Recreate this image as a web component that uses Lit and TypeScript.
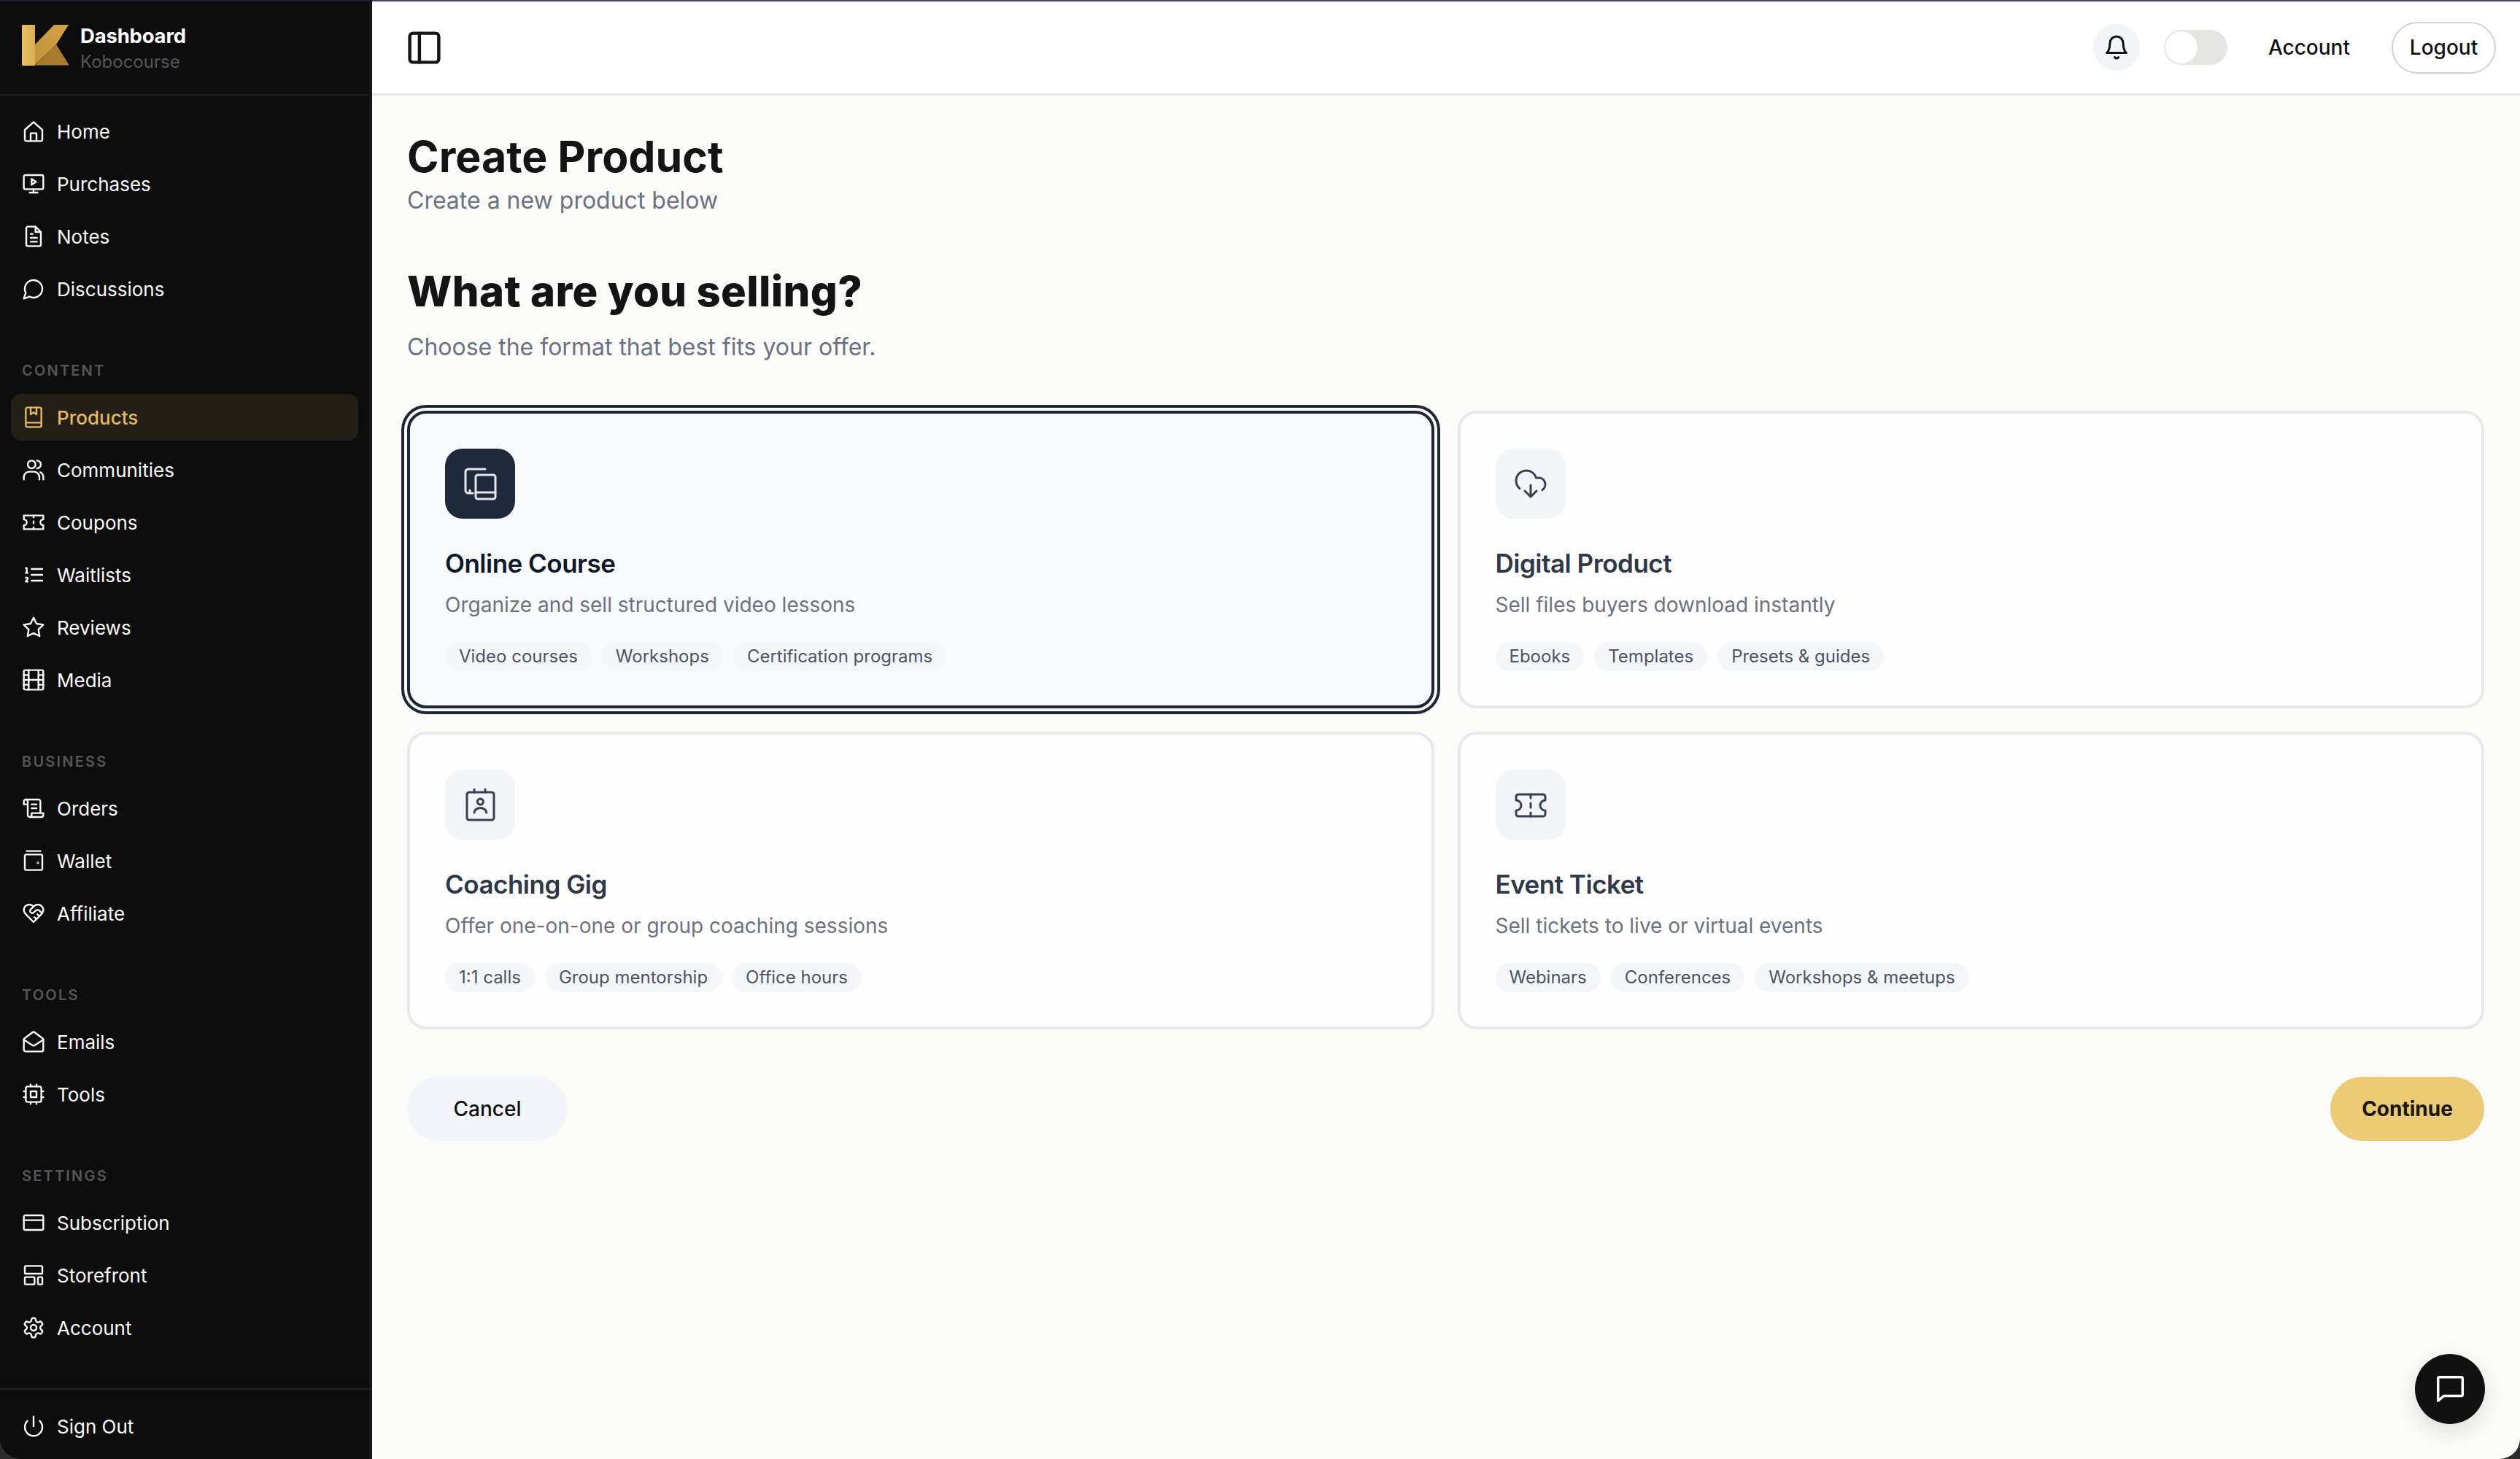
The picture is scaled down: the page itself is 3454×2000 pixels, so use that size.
import { LitElement, html, css, svg } from 'lit';
import { customElement } from 'lit/decorators.js';

const icons: Record<string, unknown> = {
  home: svg`<path d="M3 10.5 12 2.5l9 8V20.5a1.5 1.5 0 0 1-1.5 1.5h-15A1.5 1.5 0 0 1 3 20.5z"/><path d="M9 22v-8h6v8"/>`,
  purchases: svg`<rect x="2" y="3" width="20" height="14.5" rx="1.5"/><path d="M10 7v6l4.5-3z"/><path d="M12 17.5V21M8 21h8"/>`,
  notes: svg`<path d="M14 2H6a1.5 1.5 0 0 0-1.5 1.5v17A1.5 1.5 0 0 0 6 22h12a1.5 1.5 0 0 0 1.5-1.5V7.5z"/><path d="M14 2v5.5h5.5M9 9.5h2M9 13.5h6.5M9 17.5h6.5"/>`,
  discussions: svg`<path d="M7.9 20A9 9 0 1 0 4 16.1L2 22Z"/>`,
  products: svg`<path d="M4 3.5A1.5 1.5 0 0 1 5.5 2h13A1.5 1.5 0 0 1 20 3.5v17a1.5 1.5 0 0 1-1.5 1.5h-13A1.5 1.5 0 0 1 4 20.5z"/><path d="M4 17.5h16M9 2v7l3-2 3 2V2"/>`,
  communities: svg`<circle cx="10" cy="6.5" r="4"/><path d="M2 22v-2.5A5.5 5.5 0 0 1 7.5 14h5a5.5 5.5 0 0 1 5.5 5.5V22"/><path d="M15.5 2.5a4 4 0 0 1 0 8M19 14.5a5.5 5.5 0 0 1 3 5V22"/>`,
  coupons: svg`<path d="M2 5h20v4a3 3 0 0 0 0 6v4H2v-4a3 3 0 0 0 0-6z"/><path d="M12 5v2M12 11v2M12 17v2"/>`,
  waitlists: svg`<path d="M10 6h11M10 12h11M10 18h11M4 5h1v5M4 10h2M6 19H4c0-1 2-1.800 2-3s-1-1.500-2-1"/>`,
  reviews: svg`<polygon points="12 2 15.090 8.260 22 9.270 17 14.140 18.180 21.020 12 17.770 5.820 21.020 7 14.140 2 9.270 8.910 8.260 12 2"/>`,
  media: svg`<rect x="2" y="2" width="20" height="20" rx="1.500"/><path d="M7 2v20M17 2v20M2 12h20M2 7h5M2 17h5M17 7h5M17 17h5"/>`,
  orders: svg`<path d="M8 21h12a2 2 0 0 0 2-2v-2H10v2a2 2 0 1 1-4 0V5a2 2 0 1 0-4 0v3h4"/><path d="M19 17V5a2 2 0 0 0-2-2H4M15 8h-5M15 12h-5"/>`,
  wallet: svg`<path d="M5 2h14"/><rect x="3" y="5.500" width="18" height="16" rx="1.500"/><circle cx="16.500" cy="14" r=".4"/>`,
  affiliate: svg`<path d="M19 14c1.490-1.460 3-3.210 3-5.500A5.500 5.500 0 0 0 16.500 3c-1.760 0-3 .5-4.500 2-1.500-1.500-2.740-2-4.500-2A5.500 5.500 0 0 0 2 8.500c0 2.300 1.500 4.050 3 5.500l7 7Z"/><path d="M12 5 9.040 7.960a2.170 2.170 0 0 0 0 3.080c.82.820 2.130.850 3 .070l2.070-1.900a2.820 2.820 0 0 1 3.790 0l2.960 2.660M18 15l-2-2M15 18l-2-2"/>`,
  emails: svg`<path d="M21.200 8.400c.5.380.8.970.8 1.600v10a2 2 0 0 1-2 2H4a2 2 0 0 1-2-2V10a2 2 0 0 1 .8-1.600l8-6a2 2 0 0 1 2.400 0l8 6Z"/><path d="m22 10-8.970 5.700a1.940 1.940 0 0 1-2.060 0L2 10"/>`,
  tools: svg`<rect x="4" y="4" width="16" height="16" rx="2"/><rect x="9" y="9" width="6" height="6"/><path d="M15 2v2M15 20v2M2 15h2M2 9h2M20 15h2M20 9h2M9 2v2M9 20v2"/>`,
  subscription: svg`<rect x="2" y="4.500" width="20" height="15" rx="1.500"/><path d="M2 9.500h20"/>`,
  storefront: svg`<rect x="3" y="2.500" width="18" height="8" rx="1"/><rect x="3" y="14" width="10" height="7.500" rx="1"/><rect x="16.500" y="14" width="4.500" height="7.500" rx="1"/>`,
  account: svg`<path d="M12.220 2h-.44a2 2 0 0 0-2 2v.18a2 2 0 0 1-1 1.730l-.43.25a2 2 0 0 1-2 0l-.15-.08a2 2 0 0 0-2.730.73l-.22.38a2 2 0 0 0 .73 2.730l.15.1a2 2 0 0 1 1 1.720v.51a2 2 0 0 1-1 1.740l-.15.09a2 2 0 0 0-.73 2.730l.22.38a2 2 0 0 0 2.730.73l.15-.08a2 2 0 0 1 2 0l.43.25a2 2 0 0 1 1 1.730V20a2 2 0 0 0 2 2h.44a2 2 0 0 0 2-2v-.18a2 2 0 0 1 1-1.730l.43-.25a2 2 0 0 1 2 0l.15.08a2 2 0 0 0 2.730-.73l.22-.39a2 2 0 0 0-.73-2.730l-.15-.08a2 2 0 0 1-1-1.740v-.5a2 2 0 0 1 1-1.740l.15-.09a2 2 0 0 0 .73-2.730l-.22-.38a2 2 0 0 0-2.730-.73l-.15.08a2 2 0 0 1-2 0l-.43-.25a2 2 0 0 1-1-1.730V4a2 2 0 0 0-2-2z"/><circle cx="12" cy="12" r="3"/>`,
  signout: svg`<path d="M12 2v10M18.400 6.600a9 9 0 1 1-12.770.04"/>`,
  course: svg`<path d="M15.500 2H4a2 2 0 0 0-2 2v12.500a2 2 0 0 0 2 2h3M5 16.500v2"/><rect x="9" y="6" width="13.500" height="16.500" rx="1.500"/><path d="M9 18h13.500"/>`,
  digital: svg`<path d="M12 13v8l-4-4M12 21l4-4"/><path d="M4.393 15.269A7 7 0 1 1 15.710 8h1.790a4.500 4.500 0 0 1 2.436 8.284"/>`,
  coaching: svg`<rect x="3" y="3.500" width="18.500" height="19" rx="1.500"/><path d="M8 1.500v2M15.500 1.500v2"/><circle cx="12.200" cy="10" r="2"/><path d="M8 17.500a4.200 3.200 0 0 1 8.400 0"/>`,
  ticket: svg`<path d="M3.500 5h17A1.500 1.500 0 0 1 22 6.500V9a3.500 3.500 0 0 0 0 7v2.500a1.500 1.500 0 0 1-1.500 1.500h-17A1.500 1.500 0 0 1 2 18.500V16a3.500 3.500 0 0 0 0-7V6.500A1.500 1.500 0 0 1 3.500 5z"/><path d="M12 5v2.500M12 11v3M12 17.500V20"/>`,
  panel: svg`<rect x="3" y="3" width="18" height="18" rx="2"/><path d="M9 3v18"/>`,
  bell: svg`<path d="M6 8a6 6 0 0 1 12 0c0 7 3 9 3 9H3s3-2 3-9"/><path d="M10.300 21a1.940 1.940 0 0 0 3.400 0"/>`,
  chat: svg`<path d="M20 3.500H4.500a1 1 0 0 0-1 1v16l4-3.500H20a1 1 0 0 0 1-1V4.500a1 1 0 0 0-1-1z"/>`,
};

const navGroups = [
  {
    label: '',
    items: [
      ['home', 'Home'],
      ['purchases', 'Purchases'],
      ['notes', 'Notes'],
      ['discussions', 'Discussions'],
    ],
  },
  {
    label: 'CONTENT',
    items: [
      ['products', 'Products'],
      ['communities', 'Communities'],
      ['coupons', 'Coupons'],
      ['waitlists', 'Waitlists'],
      ['reviews', 'Reviews'],
      ['media', 'Media'],
    ],
  },
  {
    label: 'BUSINESS',
    items: [
      ['orders', 'Orders'],
      ['wallet', 'Wallet'],
      ['affiliate', 'Affiliate'],
    ],
  },
  {
    label: 'TOOLS',
    items: [
      ['emails', 'Emails'],
      ['tools', 'Tools'],
    ],
  },
  {
    label: 'SETTINGS',
    items: [
      ['subscription', 'Subscription'],
      ['storefront', 'Storefront'],
      ['account', 'Account'],
    ],
  },
];

const cards = [
  {
    icon: 'course',
    title: 'Online Course',
    desc: 'Organize and sell structured video lessons',
    tags: ['Video courses', 'Workshops', 'Certification programs'],
    selected: true,
  },
  {
    icon: 'digital',
    title: 'Digital Product',
    desc: 'Sell files buyers download instantly',
    tags: ['Ebooks', 'Templates', 'Presets & guides'],
  },
  {
    icon: 'coaching',
    title: 'Coaching Gig',
    desc: 'Offer one-on-one or group coaching sessions',
    tags: ['1:1 calls', 'Group mentorship', 'Office hours'],
  },
  {
    icon: 'ticket',
    title: 'Event Ticket',
    desc: 'Sell tickets to live or virtual events',
    tags: ['Webinars', 'Conferences', 'Workshops & meetups'],
  },
];

function icon(name: string, cls = 'ico') {
  return html`<svg class=${cls} viewBox="0 0 24 24" fill="none" stroke="currentColor" stroke-linecap="round" stroke-linejoin="round">${icons[name]}</svg>`;
}

@customElement('app-root')
export class AppRoot extends LitElement {
  static styles = css`
    :host {
      display: block;
      height: 100vh;
      background: #2c2c2c;
      font-family: 'Inter', 'Liberation Sans', sans-serif;
    }

    .window {
      display: flex;
      height: 100%;
      overflow: hidden;
      border-radius: 0 0 28px 28px;
      position: relative;
    }

    .sidebar {
      width: 510px;
      box-sizing: border-box;
      flex: none;
      display: flex;
      flex-direction: column;
      background: #0d0d0e;
      border-top: 2px solid #1c1a36;
      border-right: 4px solid #151516;
      color: #fafafa;
    }

    .brand {
      height: 129px;
      box-sizing: border-box;
      flex: none;
      display: flex;
      align-items: center;
      gap: 16px;
      padding-left: 30px;
      border-bottom: 2px solid #1e1e1f;
    }

    .logo {
      width: 64px;
      height: 56px;
      flex: none;
      margin-top: -8px;
    }

    .brand-text {
      margin-top: 3px;
    }

    .brand-name {
      font-size: 27.500px;
      font-weight: 700;
      line-height: 36px;
      letter-spacing: -0.2px;
      color: #fff;
    }

    .brand-sub {
      font-size: 24px;
      line-height: 36px;
      color: #565658;
    }

    nav {
      flex: 1;
      padding: 17px 15px 0 15px;
    }

    .group + .group {
      margin-top: 64px;
    }

    .group-label {
      height: 32px;
      line-height: 32px;
      margin-bottom: 16px;
      padding-left: 15px;
      font-size: 20px;
      font-weight: 600;
      letter-spacing: 2.2px;
      color: #565658;
    }

    .item {
      display: flex;
      align-items: center;
      gap: 16px;
      height: 64px;
      padding-left: 15px;
      border-radius: 14px;
      font-size: 26px;
      font-weight: 400;
    }

    .item + .item {
      margin-top: 8px;
    }

    .item.active {
      background: #241f16;
      color: #e3ba60;
      font-weight: 500;
    }

    .ico {
      width: 32px;
      height: 32px;
      flex: none;
      stroke-width: 1.8;
    }

    .foot {
      flex: none;
      height: 97px;
      box-sizing: border-box;
      padding: 18px 15px 0 15px;
      border-top: 2px solid #1e1e1f;
    }

    .main {
      flex: 1;
      min-width: 0;
      display: flex;
      flex-direction: column;
      background: #fbfbf9;
    }

    header {
      flex: none;
      height: 131px;
      box-sizing: border-box;
      display: flex;
      align-items: center;
      padding: 0 33px 0 45px;
      background: #fff;
      border-top: 2px solid #45455c;
      border-bottom: 3px solid #e9e9e7;
    }

    .panel-ico {
      width: 53px;
      height: 53px;
      stroke-width: 2;
      color: #141414;
    }

    .spacer {
      flex: 1;
    }

    .bell-btn {
      width: 64px;
      height: 64px;
      display: flex;
      align-items: center;
      justify-content: center;
      border-radius: 50%;
      background: #f3f4f7;
    }

    .bell-ico {
      width: 36px;
      height: 36px;
      stroke-width: 2;
      color: #111;
    }

    .toggle {
      width: 87px;
      height: 48px;
      box-sizing: border-box;
      margin-left: 33px;
      padding: 2px;
      border-radius: 24px;
      background: #e5e5e3;
    }

    .knob {
      width: 44px;
      height: 44px;
      border-radius: 50%;
      background: #fff;
    }

    .account {
      margin-left: 56px;
      font-size: 28px;
      font-weight: 500;
      color: #111;
    }

    .logout {
      margin-left: 57px;
      width: 143px;
      height: 71px;
      box-sizing: border-box;
      display: flex;
      align-items: center;
      justify-content: center;
      border: 2px solid #d2d2d4;
      border-radius: 36px;
      background: #fff;
      font-size: 28px;
      font-weight: 500;
      color: #111;
    }

    .content {
      padding: 48px 49px 0 48px;
    }

    h1 {
      margin: 0;
      font-size: 59px;
      font-weight: 700;
      line-height: 72px;
      color: #141414;
    }

    .sub {
      margin-top: 2px;
      font-size: 32px;
      line-height: 44px;
      color: #6b7280;
    }

    h2 {
      margin: 66px 0 0;
      font-size: 58px;
      font-weight: 800;
      line-height: 72px;
      letter-spacing: 0.35px;
      color: #141414;
    }

    .sub2 {
      margin-top: 19px;
    }

    .grid {
      margin-top: 65px;
      display: grid;
      grid-template-columns: 1fr 1fr;
      gap: 32px;
    }

    .card {
      box-sizing: border-box;
      height: 408px;
      padding: 48px;
      border: 4px solid #e8e9ed;
      border-radius: 26px;
      background: #fefefe;
    }

    .card.selected {
      border-color: #1e2636;
      background: #f8fafc;
      box-shadow: 0 0 0 4px #fbfbf9, 0 0 0 8px #1e2636;
    }

    .card-ico {
      width: 96px;
      height: 96px;
      display: flex;
      align-items: center;
      justify-content: center;
      border-radius: 24px;
      background: #f3f5f9;
      color: #374151;
    }

    .selected .card-ico {
      background: #1e293b;
      color: #e5e7eb;
    }

    .card-ico svg {
      width: 48px;
      height: 48px;
      stroke-width: 1.5;
    }

    .card-title {
      margin-top: 39px;
      font-size: 35px;
      font-weight: 600;
      line-height: 44px;
      letter-spacing: -0.5px;
      color: #2f3848;
    }

    .selected .card-title {
      color: #0f172a;
    }

    .card-desc {
      margin-top: 15px;
      font-size: 28px;
      line-height: 40px;
      color: #6b7280;
    }

    .tags {
      display: flex;
      gap: 14px;
      margin-top: 31px;
    }

    .tag {
      height: 40px;
      line-height: 40px;
      padding: 0 19px;
      border-radius: 20px;
      background: #f4f6f9;
      font-size: 24px;
      color: #4b5563;
    }

    .actions {
      display: flex;
      justify-content: space-between;
      margin-top: 65px;
    }

    .btn {
      height: 88px;
      display: flex;
      align-items: center;
      justify-content: center;
      border-radius: 44px;
    }

    .cancel {
      width: 220px;
      background: #f3f5fa;
      font-size: 28px;
      font-weight: 500;
      color: #111;
    }

    .continue {
      width: 211px;
      background: #ebcb73;
      font-size: 28px;
      font-weight: 700;
      color: #1a1505;
    }

    .fab {
      position: absolute;
      right: 48px;
      bottom: 48px;
      width: 96px;
      height: 96px;
      display: flex;
      align-items: center;
      justify-content: center;
      border-radius: 50%;
      background: #111;
      color: #fff;
      box-shadow: 0 10px 30px rgba(0, 0, 0, 0.12);
    }

    .fab svg {
      width: 46px;
      height: 46px;
      stroke-width: 1.8;
    }
  `;

  renderItem([name, label]: string[]) {
    return html`<div class="item ${label === 'Products' ? 'active' : ''}">${icon(name)}<span>${label}</span></div>`;
  }

  render() {
    return html`
      <div class="window">
        <aside class="sidebar">
          <div class="brand">
            <svg class="logo" viewBox="0 0 64 56">
              <defs>
                <linearGradient id="kbar" x1="0" x2="1" y1="0" y2="0">
                  <stop offset="0" stop-color="#e9c265" />
                  <stop offset="1" stop-color="#d9ae52" />
                </linearGradient>
                <linearGradient id="karm" x1="0" x2="1" y1="1" y2="0">
                  <stop offset="0" stop-color="#c2923c" />
                  <stop offset="1" stop-color="#d3a347" />
                </linearGradient>
              </defs>
              <path d="M1.500 0H18V56H1.500A1.500 1.500 0 0 1 0 54.500V1.500A1.500 1.500 0 0 1 1.500 0Z" fill="url(#kbar)" />
              <path d="M18 27 44 0H64L47 27 18 55Z" fill="url(#karm)" />
              <path d="M18 55.500 47 27 64 54a1 1 0 0 1-1 1.500Z" fill="#aa7b2f" />
            </svg>
            <div class="brand-text">
              <div class="brand-name">Dashboard</div>
              <div class="brand-sub">Kobocourse</div>
            </div>
          </div>
          <nav>
            ${navGroups.map(
              (g) => html`<div class="group">
                ${g.label ? html`<div class="group-label">${g.label}</div>` : ''}
                ${g.items.map((it) => this.renderItem(it))}
              </div>`
            )}
          </nav>
          <div class="foot">${this.renderItem(['signout', 'Sign Out'])}</div>
        </aside>
        <div class="main">
          <header>
            ${icon('panel', 'panel-ico')}
            <div class="spacer"></div>
            <div class="bell-btn">${icon('bell', 'bell-ico')}</div>
            <div class="toggle"><div class="knob"></div></div>
            <div class="account">Account</div>
            <div class="logout">Logout</div>
          </header>
          <div class="content">
            <h1>Create Product</h1>
            <div class="sub">Create a new product below</div>
            <h2>What are you selling?</h2>
            <div class="sub sub2">Choose the format that best fits your offer.</div>
            <div class="grid">
              ${cards.map(
                (c) => html`<div class="card ${c.selected ? 'selected' : ''}">
                  <div class="card-ico">${icon(c.icon, '')}</div>
                  <div class="card-title">${c.title}</div>
                  <div class="card-desc">${c.desc}</div>
                  <div class="tags">${c.tags.map((t) => html`<span class="tag">${t}</span>`)}</div>
                </div>`
              )}
            </div>
            <div class="actions">
              <div class="btn cancel">Cancel</div>
              <div class="btn continue">Continue</div>
            </div>
          </div>
        </div>
        <div class="fab">${icon('chat', '')}</div>
      </div>
    `;
  }
}
